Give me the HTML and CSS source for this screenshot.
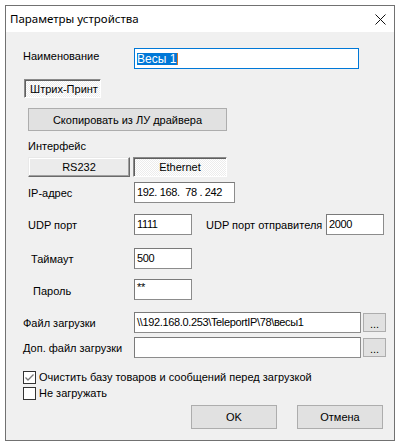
FILE: index.html
```html
<!DOCTYPE html>
<html lang="ru">
<head>
<meta charset="utf-8">
<title>Параметры устройства</title>
<link rel="stylesheet" href="styles.css">
</head>
<body>
<div class="window">
  <div class="titlebar">
    <span class="title">Параметры устройства</span>
    <svg class="close" width="11" height="11" viewBox="0 0 11 11"><path d="M0.5 0.5 L10.5 10.5 M10.5 0.5 L0.5 10.5" stroke="#111" stroke-width="1" fill="none"/></svg>
  </div>
  <div class="content">
    <div class="row r-name">
      <span class="lbl l-name">Наименование</span>
      <div class="field focus w-name"><span class="sel">Весы 1</span><span class="caret"></span></div>
    </div>
    <div class="row r-brand">
      <div class="btn pressed brand">Штрих-Принт</div>
    </div>
    <div class="row r-copy">
      <div class="btn copy">Скопировать из ЛУ драйвера</div>
    </div>
    <div class="row r-iface">
      <span class="lbl l-in">Интерфейс</span>
    </div>
    <div class="row r-tabs">
      <div class="btn raised rs">RS232</div>
      <div class="btn pressed eth">Ethernet</div>
    </div>
    <div class="row r-ip">
      <span class="lbl l-in">IP-адрес</span>
      <div class="field w-ip">192. 168.&nbsp; 78 . 242</div>
    </div>
    <div class="row r-udp">
      <span class="lbl l-in">UDP порт</span>
      <div class="field w-sm">1111</div>
      <span class="lbl2">UDP порт отправителя</span>
      <div class="field w-sm">2000</div>
    </div>
    <div class="row r-time">
      <span class="lbl l-time">Таймаут</span>
      <div class="field w-sm">500</div>
    </div>
    <div class="row r-pass">
      <span class="lbl l-pass">Пароль</span>
      <div class="field w-sm pw">**</div>
    </div>
    <div class="row r-file">
      <span class="lbl">Файл загрузки</span>
      <div class="field w-file">\\192.168.0.253\TeleportIP\78\весы1</div>
      <div class="btn dots">...</div>
    </div>
    <div class="row r-dop">
      <span class="lbl">Доп. файл загрузки</span>
      <div class="field w-file"></div>
      <div class="btn dots">...</div>
    </div>
    <div class="row r-cb1">
      <span class="cb"><svg width="13" height="13" viewBox="0 0 13 13"><rect x="0.5" y="0.5" width="12" height="12" fill="#fff" stroke="#333"/><path d="M2.5 6.5 L5 9 L10.5 3.5" stroke="#777" stroke-width="1.3" fill="none"/></svg></span>
      <span class="cbl">Очистить базу товаров и сообщений перед загрузкой</span>
    </div>
    <div class="row r-cb2">
      <span class="cb"><svg width="13" height="13" viewBox="0 0 13 13"><rect x="0.5" y="0.5" width="12" height="12" fill="#fff" stroke="#333"/></svg></span>
      <span class="cbl">Не загружать</span>
    </div>
    <div class="row r-btns">
      <div class="btn dlg">OK</div>
      <div class="btn dlg">Отмена</div>
    </div>
  </div>
</div>
</body>
</html>
```

FILE: styles.css
```css
* { box-sizing: border-box; }
html, body { margin: 0; padding: 0; background: #fff; }
body {
  font-family: "Liberation Sans", Arial, sans-serif;
  font-size: 11px;
  color: #000;
}
.window {
  margin: 5px 0 0 5px;
  width: 390px;
  height: 436px;
  border: 1px solid #717171;
  display: flex;
  flex-direction: column;
}
.titlebar {
  height: 26px;
  flex: none;
  background: #fff;
  display: flex;
  align-items: center;
  justify-content: space-between;
  padding: 0 8px 0 4px;
}
.title {
  font-family: "Noto Sans", "Open Sans", sans-serif;
  font-size: 11.5px;
  color: #000;
  padding-bottom: 1px;
}
.close { display: block; margin-top: 1px; }
.content {
  flex: 1;
  background: #f0f0f0;
  padding-top: 16px;
}
.row {
  display: flex;
  align-items: center;
}
.lbl {
  width: 128px;
  flex: none;
  padding-left: 17px;
  white-space: nowrap;
}
.l-name { padding-bottom: 6px; }
.l-in { padding-left: 22px; }
.l-time { padding-left: 25px; }
.l-pass { padding-left: 27px; padding-top: 3px; }
.lbl2 {
  width: 120px;
  margin-left: 14px;
  white-space: nowrap;
}
.field {
  height: 21px;
  background: #fff;
  border: 1px solid #7a7a7a;
  border-right-color: #8c8c8c;
  border-bottom-color: #8c8c8c;
  font-size: 11px;
  letter-spacing: -0.35px;
  line-height: 19px;
  padding-left: 2px;
  white-space: nowrap;
  overflow: hidden;
}
.focus {
  border-color: #0078d7;
  display: flex;
  align-items: center;
  font-size: 12px;
  letter-spacing: 0;
}
.sel {
  background: #0078d7;
  color: #fff;
  line-height: 12px;
  height: 12px;
  padding-right: 1px;
}
.caret {
  width: 1px;
  height: 12px;
  background: #d2782c;
}
.pw { line-height: 14px; }
.w-name { width: 225px; }
.w-ip { width: 101px; }
.w-sm { width: 58px; }
.w-file { width: 227px; }

.btn {
  display: flex;
  align-items: center;
  justify-content: center;
  background: #e1e1e1;
  border: 1px solid #adadad;
  white-space: nowrap;
}
.pressed {
  border-color: #8a8a8a #fff #fff #8a8a8a;
  box-shadow: inset 1px 1px #5f5f5f;
  background: repeating-conic-gradient(#fff 0 25%, #ececec 0 50%) 0 0 / 2px 2px;
}
.raised {
  background: #ebebeb;
  border-color: #e9e9e9 #6a6a6a #6a6a6a #e9e9e9;
  box-shadow: inset -1px -1px #a0a0a0, inset 1px 1px #fff;
}
.brand {
  margin-left: 18px;
  width: 77px;
  height: 19px;
  padding-left: 3px;
}
.copy {
  margin-left: 22px;
  width: 199px;
  height: 23px;
}
.rs {
  margin-left: 22px;
  width: 102px;
  height: 20px;
}
.eth {
  margin-left: 3px;
  width: 94px;
  height: 20px;
}
.dots {
  width: 23px;
  height: 19px;
  margin-left: 2px;
  align-items: flex-end;
  padding-bottom: 2px;
  line-height: 10px;
}
.dlg {
  width: 86px;
  height: 24px;
}

.r-name { margin-top: 0; height: 21px; }
.r-brand { margin-top: 10px; height: 19px; }
.r-copy { margin-top: 10px; height: 23px; }
.r-iface { margin-top: 8px; height: 14px; }
.r-tabs { margin-top: 4px; height: 20px; }
.r-ip { margin-top: 5px; height: 21px; }
.r-udp { margin-top: 11px; height: 21px; }
.r-time { margin-top: 13px; height: 21px; }
.r-pass { margin-top: 10px; height: 21px; }
.r-file { margin-top: 12px; height: 21px; }
.r-dop { margin-top: 4px; height: 21px; }
.r-cb1 { margin-top: 12px; height: 14px; padding-left: 17px; }
.r-cb2 { margin-top: 2px; height: 14px; padding-left: 17px; }
.r-btns {
  margin-top: 5px;
  height: 24px;
  padding-left: 185px;
  gap: 20px;
}
.cb { display: block; width: 13px; height: 13px; flex: none; }
.cb svg { display: block; }
.cbl { margin-left: 3px; white-space: nowrap; }
```
